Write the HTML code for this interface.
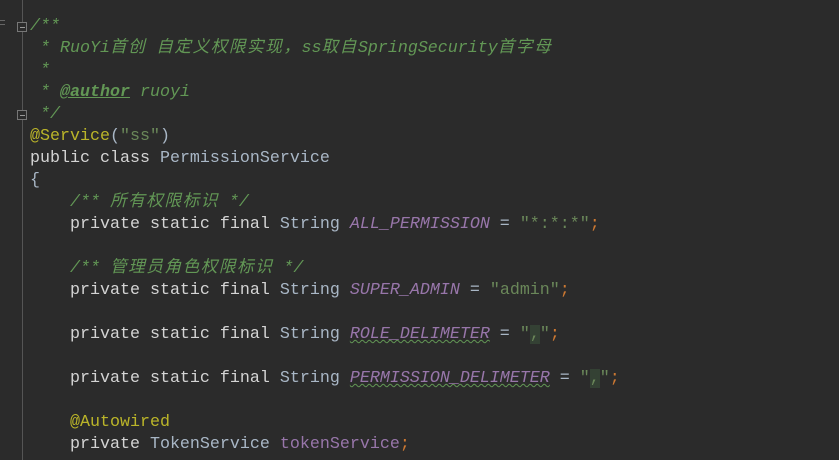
<!DOCTYPE html>
<html><head><meta charset="utf-8"><style>
html,body{margin:0;padding:0;background:#2b2b2b;width:839px;height:460px;overflow:hidden}
.g{position:absolute;left:22px;top:0;width:1px;height:460px;background:#555}
.code{position:absolute;left:30px;top:16px;font-family:"Liberation Mono","Noto Sans CJK SC",monospace;font-size:16.67px;line-height:22px;color:#a9b7c6;white-space:pre}
.c{color:#629755;font-style:italic}
.k{color:#d4d4d4}
.s{color:#6a8759}
.p{color:#9876aa;font-style:italic}
.a{color:#bbb529}
.o{color:#cc7832}
.u{text-decoration:underline wavy #629755;text-decoration-thickness:1px}
.hl{background:#344134}
.cj{letter-spacing:1.5px}
.f{position:absolute;left:17px;width:10px;height:10px;border:1px solid #777;background:#2b2b2b;box-sizing:border-box}
.f:after{content:"";position:absolute;left:2px;top:4px;width:5px;height:1px;background:#999}
</style></head><body>
<div class="g"></div>
<div class="f" style="top:22px"></div>
<div class="f" style="top:110px"></div>
<div style="position:absolute;left:0;top:20px;width:5px;height:3px;border-top:1px solid #666;border-bottom:1px solid #666"></div>
<div class="code"><span class="c">/**
 * RuoYi<span class="cj">首创</span> <span class="cj">自定义权限实现，</span>ss<span class="cj">取自</span>SpringSecurity<span class="cj">首字母</span>
 *
 * <b style="text-decoration:underline">@author</b> ruoyi
 */</span>
<span class="a">@Service</span>(<span class="s">"ss"</span>)
<span class="k">public class</span> PermissionService
{
    <span class="c">/** <span class="cj">所有权限标识</span> */</span>
    <span class="k">private static final</span> String <span class="p">ALL_PERMISSION</span> = <span class="s">"*:*:*"</span><span class="o">;</span>

    <span class="c">/** <span class="cj">管理员角色权限标识</span> */</span>
    <span class="k">private static final</span> String <span class="p">SUPER_ADMIN</span> = <span class="s">"admin"</span><span class="o">;</span>

    <span class="k">private static final</span> String <span class="p u">ROLE_DELIMETER</span> = <span class="s">"<span class="hl">,</span>"</span><span class="o">;</span>

    <span class="k">private static final</span> String <span class="p u">PERMISSION_DELIMETER</span> = <span class="s">"<span class="hl">,</span>"</span><span class="o">;</span>

    <span class="a">@Autowired</span>
    <span class="k">private</span> TokenService <span class="p" style="font-style:normal">tokenService</span><span class="o">;</span>
</div>
</body></html>
